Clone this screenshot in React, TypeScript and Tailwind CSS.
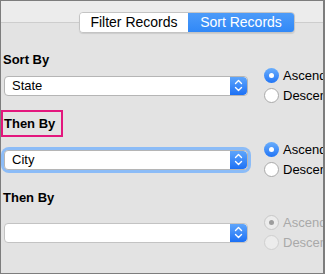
import React from "react";

const font = { fontFamily: '"Helvetica Neue", "Liberation Sans", Arial, sans-serif' };

function Stepper() {
  return (
    <div className="w-[17px] h-full bg-gradient-to-b from-[#5ea5fb] to-[#1b70f5] rounded-r-[4px] flex items-center justify-center">
      <svg width="9" height="13" viewBox="0 0 9 13" fill="none" stroke="white" strokeWidth="1.4" strokeLinecap="round" strokeLinejoin="round">
        <path d="M1.5 4.5 L4.5 1.5 L7.5 4.5" />
        <path d="M1.5 8.5 L4.5 11.5 L7.5 8.5" />
      </svg>
    </div>
  );
}

function Select({ value, focused, disabled }: { value: string; focused?: boolean; disabled?: boolean }) {
  return (
    <div className={focused ? "rounded-[5px] ring-[3px] ring-[#8cbcf7]" : ""}>
      <div
        className={
          "h-[20px] w-[244px] bg-white rounded-[4px] border flex items-center overflow-hidden " +
          (disabled ? "border-[#c3c3c3]" : "border-[#b5b5b5]")
        }
      >
        <div className="flex-1 pl-[7px] text-[13px] text-black leading-none">{value}</div>
        <Stepper />
      </div>
    </div>
  );
}

function Radio({ checked, disabled, label }: { checked?: boolean; disabled?: boolean; label: string }) {
  return (
    <div className="flex items-center gap-[4px] h-[15px]">
      {checked && !disabled ? (
        <div className="w-[15px] h-[15px] shrink-0 rounded-full bg-gradient-to-b from-[#6aaefc] to-[#1f74f5] flex items-center justify-center">
          <div className="w-[5px] h-[5px] rounded-full bg-white" />
        </div>
      ) : checked && disabled ? (
        <div className="w-[15px] h-[15px] shrink-0 rounded-full bg-[#ececec] border border-[#c8c8c8] flex items-center justify-center">
          <div className="w-[5px] h-[5px] rounded-full bg-[#9d9d9d]" />
        </div>
      ) : (
        <div
          className={
            "w-[15px] h-[15px] shrink-0 rounded-full border " +
            (disabled ? "bg-[#ececec] border-[#cfcfcf]" : "bg-white border-[#a9a9a9]")
          }
        />
      )}
      <span className={"text-[13px] leading-none whitespace-nowrap " + (disabled ? "text-[#a9a9a9]" : "text-black")}>{label}</span>
    </div>
  );
}

function Row({ value, focused, disabled }: { value: string; focused?: boolean; disabled?: boolean }) {
  return (
    <div className="flex items-center h-[35px]">
      <div className="pl-[3px]">
        <Select value={value} focused={focused} disabled={disabled} />
      </div>
      <div className="ml-[16px] flex flex-col gap-[5px]">
        <Radio checked disabled={disabled} label="Ascending" />
        <Radio disabled={disabled} label="Descending" />
      </div>
    </div>
  );
}

export default function App() {
  return (
    <div
      className="w-[325px] h-[274px] overflow-hidden bg-[#e3e3e3] border border-[#7d7d7d] border-r-2 relative"
      style={font}
    >
      <div className="h-[22px] bg-[#ececec] border-b border-[#cdcdcd]" />
      <div className="absolute left-[78px] top-[11px] h-[21px] flex rounded-[4px] border border-[#c4c4c4] overflow-hidden shadow-[0_1px_1px_rgba(0,0,0,0.1)]">
        <div className="w-[108px] bg-white text-[14px] text-black flex items-center justify-center">Filter Records</div>
        <div className="w-[106px] bg-gradient-to-b from-[#4c9bf9] to-[#3088f7] text-[14px] text-white flex items-center justify-center">
          Sort Records
        </div>
      </div>
      <div className="mt-[29px] pl-[2px] text-[13px] font-bold text-black leading-[16px]">Sort By</div>
      <Row value="State" />
      <div className="mt-[7px] w-[62px] h-[27px] border-2 border-[#e3177d] flex items-center pl-[1px]">
        <span className="text-[13px] font-bold text-black leading-none">Then By</span>
      </div>
      <div className="mt-[5px]">
        <Row value="City" focused />
      </div>
      <div className="mt-[13px] pl-[2px] text-[13px] font-bold text-black leading-[16px]">Then By</div>
      <div className="mt-[9px]">
        <Row value="" disabled />
      </div>
    </div>
  );
}
